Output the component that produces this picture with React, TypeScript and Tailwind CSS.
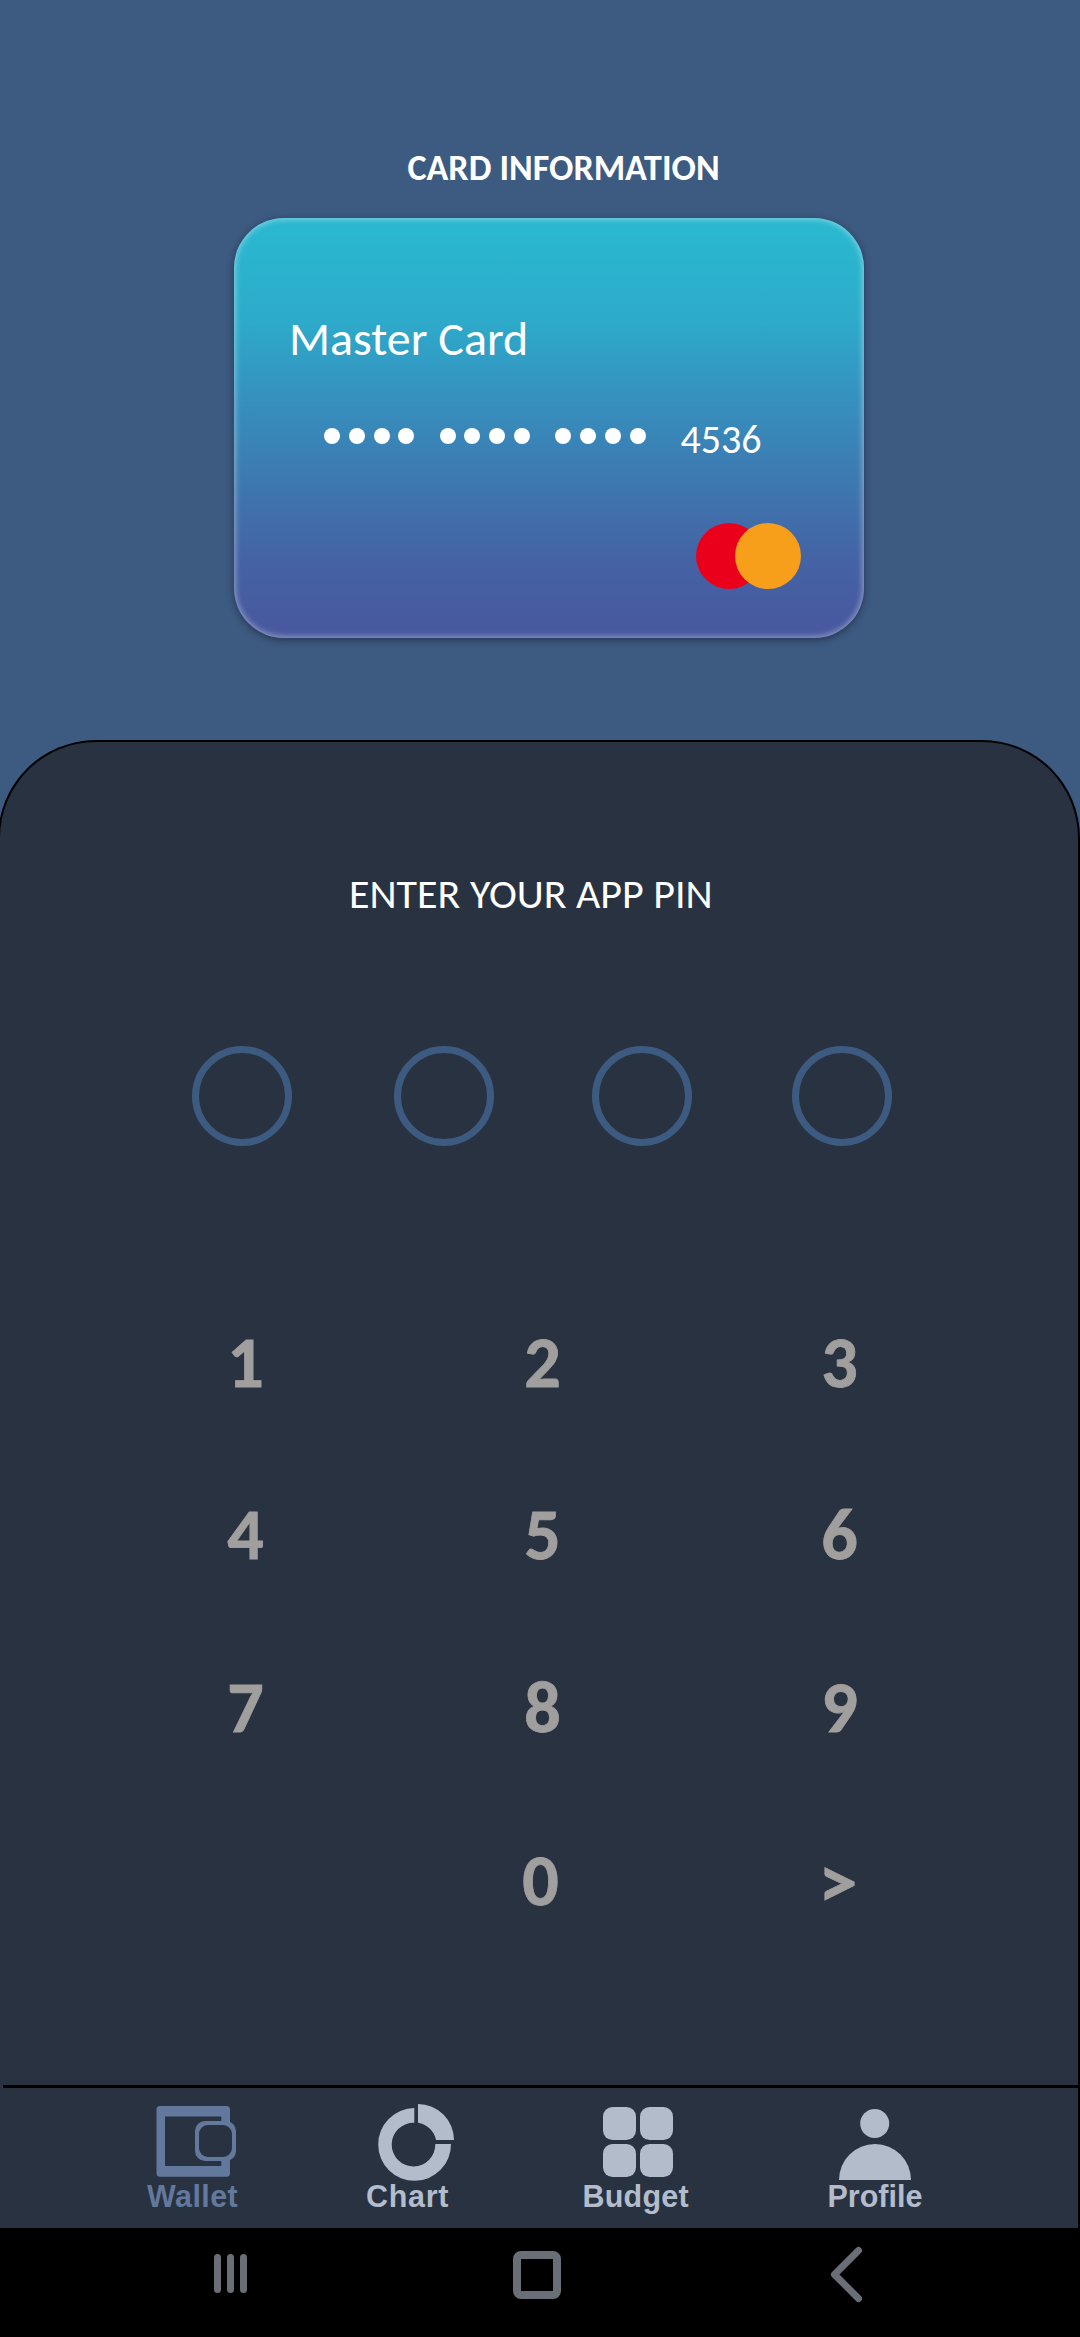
import type { ReactNode } from 'react';

const KEY_ROWS = [
  ['1', '2', '3'],
  ['4', '5', '6'],
  ['7', '8', '9'],
];

function DotGroup() {
  return (
    <div className="flex gap-[8.8px]">
      {[0, 1, 2, 3].map((i) => (
        <span key={i} className="size-4 rounded-full bg-white" />
      ))}
    </div>
  );
}

function BankCard() {
  return (
    <div className="ml-[234px] mt-7 h-[420px] w-[630px] rounded-[50px] bg-[linear-gradient(180deg,#2ab7d0_4%,#2dabca_24%,#3592bf_42%,#3d79b0_62%,#4464a5_80%,#4859a0_96%)] pt-[91px] text-white shadow-[inset_0_0_6px_1px_rgba(255,255,255,0.45),0_2px_7px_0_rgba(25,30,50,0.6)]">
      <div className="pl-[55px] text-[48px] leading-[60px]">Master Card</div>
      <div className="mt-[46px] flex h-12 pl-[90px]">
        <div className="flex gap-[25.2px] pt-[12.5px]">
          <DotGroup />
          <DotGroup />
          <DotGroup />
        </div>
        <div className="ml-[35px] pt-px text-[40px] leading-[48px]">4536</div>
      </div>
      <div className="ml-[461.5px] mt-[60px] flex">
        <span className="size-[66px] rounded-full bg-[#eb001b]" />
        <span className="-ml-[26.5px] size-[66px] rounded-full bg-[#f79e1b]" />
      </div>
    </div>
  );
}

function Key({ children }: { children?: ReactNode }) {
  return <div className="h-[172.5px] text-center leading-[172.5px]">{children}</div>;
}

function Keypad() {
  return (
    <div className="ml-[97px] mt-[129.5px] w-[891px] text-[72px] font-bold text-[#a09f9e] [-webkit-text-stroke:0.8px_#a09f9e]">
      {KEY_ROWS.map((row) => (
        <div key={row[0]} className="grid grid-cols-3">
          {row.map((k) => (
            <Key key={k}>{k}</Key>
          ))}
        </div>
      ))}
      <div className="-ml-[2px] mr-[2px] grid grid-cols-3 pt-px">
        <Key />
        <Key>0</Key>
        <Key>
          <span className="inline-block origin-center translate-y-[2px] scale-x-[1.08]">&gt;</span>
        </Key>
      </div>
    </div>
  );
}

function TabBar() {
  return (
    <nav className="ml-[3px] flex h-[143px] border-t-[3px] border-black pt-3 font-['Liberation_Sans',Arial,sans-serif] text-[30.5px] font-bold leading-9 text-[#b3bccb]">
      <div className="ml-[144px] w-[92px] text-[#62789d]">
        <svg className="h-[78px] w-[92px] overflow-visible" viewBox="147 2100 92 78" fill="none">
          <path
            fill="currentColor"
            fillRule="evenodd"
            d="M160 2106H226.500a3.500 3.500 0 0 1 3.500 3.500V2173.300a3.500 3.500 0 0 1 -3.500 3.500H160a3.500 3.500 0 0 1 -3.500 -3.500V2109.500a3.500 3.500 0 0 1 3.500 -3.500ZM165 2116.500V2166H221.300V2116.500Z"
          />
          <rect x="195" y="2121" width="41" height="40" rx="10" fill="currentColor" />
          <rect x="199" y="2125" width="33" height="32" rx="9" fill="#293241" />
        </svg>
        <div className="tracking-[0.4px]">Wallet</div>
      </div>
      <div className="ml-[127px] w-[86px]">
        <svg className="h-[78px] w-[86px] overflow-visible" viewBox="366 2100 86 78" fill="currentColor">
          <path d="M414.300 2108A36.400 36.400 0 1 0 451 2144H435.300A21.800 21.800 0 1 1 414.300 2122.800Z" />
          <path d="M418 2104A36 36 0 0 1 454 2140H436A22 22 0 0 0 418 2122.800Z" />
        </svg>
        <div className="tracking-[0.7px]">Chart</div>
      </div>
      <div className="ml-[130.500px] w-[108px]">
        <svg className="h-[78px] w-[108px] overflow-visible" viewBox="582 2100 108 78" fill="currentColor">
          <rect x="602" y="2107" width="33" height="33" rx="9.500" />
          <rect x="639" y="2107" width="33" height="33" rx="9.500" />
          <rect x="602" y="2144" width="33" height="33" rx="9.500" />
          <rect x="639" y="2144" width="33" height="33" rx="9.500" />
        </svg>
        <div className="tracking-[0.2px]">Budget</div>
      </div>
      <div className="ml-[137px] w-[96px]">
        <svg className="h-[78px] w-[96px] overflow-visible" viewBox="827 2100 96 78" fill="currentColor">
          <circle cx="873.700" cy="2123.500" r="14.500" />
          <path d="M838 2180A36 36 0 0 1 910 2180Z" />
        </svg>
        <div>Profile</div>
      </div>
    </nav>
  );
}

function SystemBar() {
  return (
    <div className="flex h-[109px] bg-black">
      <div className="ml-[214px] mt-[26px] flex gap-[6px]">
        {[0, 1, 2].map((i) => (
          <span key={i} className="h-[39px] w-[7px] rounded-full bg-[#6a6e76]" />
        ))}
      </div>
      <span className="ml-[266px] mt-[23px] size-12 rounded-[8px] border-8 border-[#6a6e76]" />
      <svg className="ml-[266px] mt-[17px] h-[60px] w-[40px]" viewBox="827 2245 40 60" fill="none" stroke="#6a6e76" strokeWidth="7" strokeLinecap="round" strokeLinejoin="round">
        <path d="M858.500 2250.500L834.500 2274.500L858.500 2298.500" />
      </svg>
    </div>
  );
}

export default function App() {
  return (
    <div className="h-[2337px] w-[1080px] overflow-hidden bg-[#3d5a80] font-['Carlito','Calibri','Lato',sans-serif]">
      <header className="h-[740px] pt-[146px]">
        <h1 className="pl-[407.5px] text-[36px] font-bold leading-[44px] text-white">CARD INFORMATION</h1>
        <BankCard />
      </header>
      <main className="-ml-[2px] flex h-[1488px] w-[1082px] flex-col rounded-t-[98px] border-x-2 border-t-2 border-black bg-[#293241] pt-[126px]">
        <h2 className="pl-[349px] text-[42px] leading-[52px] text-white">ENTER YOUR APP PIN</h2>
        <div className="ml-48 mt-[126px] flex">
          <span className="size-[100px] rounded-full border-[7px] border-[#3d5a80]" />
          <span className="ml-[102px] size-[100px] rounded-full border-[7px] border-[#3d5a80]" />
          <span className="ml-[98px] size-[100px] rounded-full border-[7px] border-[#3d5a80]" />
          <span className="ml-[100px] size-[100px] rounded-full border-[7px] border-[#3d5a80]" />
        </div>
        <Keypad />
        <div className="mt-auto">
          <TabBar />
        </div>
      </main>
      <SystemBar />
    </div>
  );
}
